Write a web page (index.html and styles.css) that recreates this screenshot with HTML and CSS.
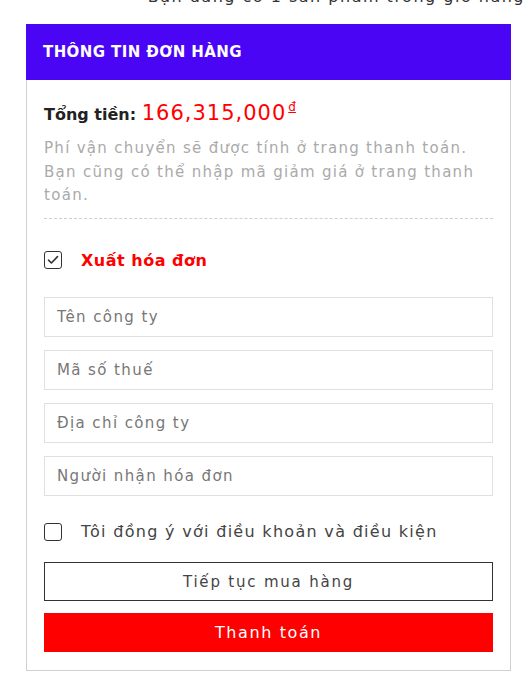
FILE: index.html
```html
<!DOCTYPE html>
<html lang="vi">
<head>
    <meta charset="UTF-8">
    <title>Giỏ hàng</title>
    <meta name="viewport" content="width=device-width, initial-scale=1">
    <link rel="stylesheet" href="styles.css">
</head>
<body>
    <div class="page">
        <p class="cart-count">Bạn đang có 1 sản phẩm trong giỏ hàng</p>
        <div class="order-card">
            <div class="order-head">THÔNG TIN ĐƠN HÀNG</div>
            <div class="order-body">
                <div class="total">
                    Tổng tiền: <span class="price">166,315,000<sup>đ</sup></span>
                </div>
                <p class="note">Phí vận chuyển sẽ được tính ở trang thanh toán. Bạn cũng có thể nhập mã giảm giá ở trang thanh toán.</p>

                <label class="check-row invoice">
                    <span class="box">
                        <svg width="12" height="10" viewBox="0 0 12 10"><path d="M1.5 5.2 L4.4 8 L10.5 1.6" fill="none" stroke="#333" stroke-width="1.6" stroke-linecap="round" stroke-linejoin="round"/></svg>
                    </span>
                    Xuất hóa đơn
                </label>

                <div class="fields">
                    <input type="text" placeholder="Tên công ty">
                    <input type="text" placeholder="Mã số thuế">
                    <input type="text" placeholder="Địa chỉ công ty">
                    <input type="text" placeholder="Người nhận hóa đơn">
                </div>

                <label class="check-row agree">
                    <span class="box"></span>
                    Tôi đồng ý với điều khoản và điều kiện
                </label>

                <button type="button" class="btn-outline">Tiếp tục mua hàng</button>
                <button type="button" class="btn-pay">Thanh toán</button>
            </div>
        </div>
    </div>
</body>
</html>
```

FILE: styles.css
```css
body {
    margin: 0;
    padding: 0;
    background: #fff;
    font-family: 'DejaVu Sans', sans-serif;
    color: #333;
}
.page {
    padding: 0 20px 0 26px;
}
.cart-count {
    margin: -13px -14px 0 0;
    text-align: right;
    font-size: 16px;
    line-height: 20px;
    letter-spacing: 1.5px;
    color: #333;
    white-space: nowrap;
}
.order-card {
    margin-top: 17px;
    border: 1px solid #d0d0d0;
    border-top: none;
}
.order-head {
    background: #4a05f5;
    color: #fff;
    font-weight: bold;
    font-size: 15px;
    letter-spacing: 0.4px;
    height: 56px;
    line-height: 56px;
    padding: 0 17px;
    margin: 0 -1px;
}
.order-body {
    padding: 13px 17px 18px 17px;
}
.total {
    font-weight: bold;
    font-size: 16px;
    color: #222;
    line-height: 28px;
}
.price {
    color: #ff0000;
    font-weight: normal;
    font-size: 21px;
    letter-spacing: 1px;
}
.price sup {
    font-size: 12px;
    text-decoration: underline;
    vertical-align: 9px;
    letter-spacing: 0;
    margin-left: 2px;
}
.note {
    margin: 8px 0 0 0;
    font-size: 15px;
    letter-spacing: 1.3px;
    line-height: 23.5px;
    color: #aaa;
    padding-bottom: 10px;
    border-bottom: 1px dashed #cfcfcf;
}
.check-row {
    display: flex;
    align-items: center;
    gap: 19px;
    font-size: 16px;
    cursor: pointer;
}
.box {
    width: 16px;
    height: 16px;
    border: 1px solid #333;
    border-radius: 3px;
    display: flex;
    align-items: center;
    justify-content: center;
}
.invoice {
    margin-top: 32px;
    color: #ff0000;
    font-weight: bold;
    letter-spacing: 0.5px;
}
.fields {
    margin-top: 27.5px;
    display: flex;
    flex-direction: column;
    gap: 13px;
}
.fields input {
    height: 40px;
    box-sizing: border-box;
    border: 1px solid #e0e0e0;
    padding: 0 12px;
    font-family: inherit;
    font-size: 15px;
    letter-spacing: 1.4px;
    color: #333;
    outline: none;
}
.fields input::placeholder {
    color: #777;
}
.agree {
    margin-top: 26px;
    color: #444;
    letter-spacing: 1.3px;
}
button {
    display: block;
    width: 100%;
    height: 39px;
    font-family: inherit;
    font-size: 15px;
    cursor: pointer;
}
.btn-outline {
    margin-top: 21px;
    background: #fff;
    border: 1px solid #333;
    color: #444;
    letter-spacing: 1.8px;
}
.btn-pay {
    margin-top: 12px;
    background: #ff0000;
    border: none;
    color: #fff;
    font-size: 16px;
    font-weight: 500;
    letter-spacing: 1.6px;
}
```
